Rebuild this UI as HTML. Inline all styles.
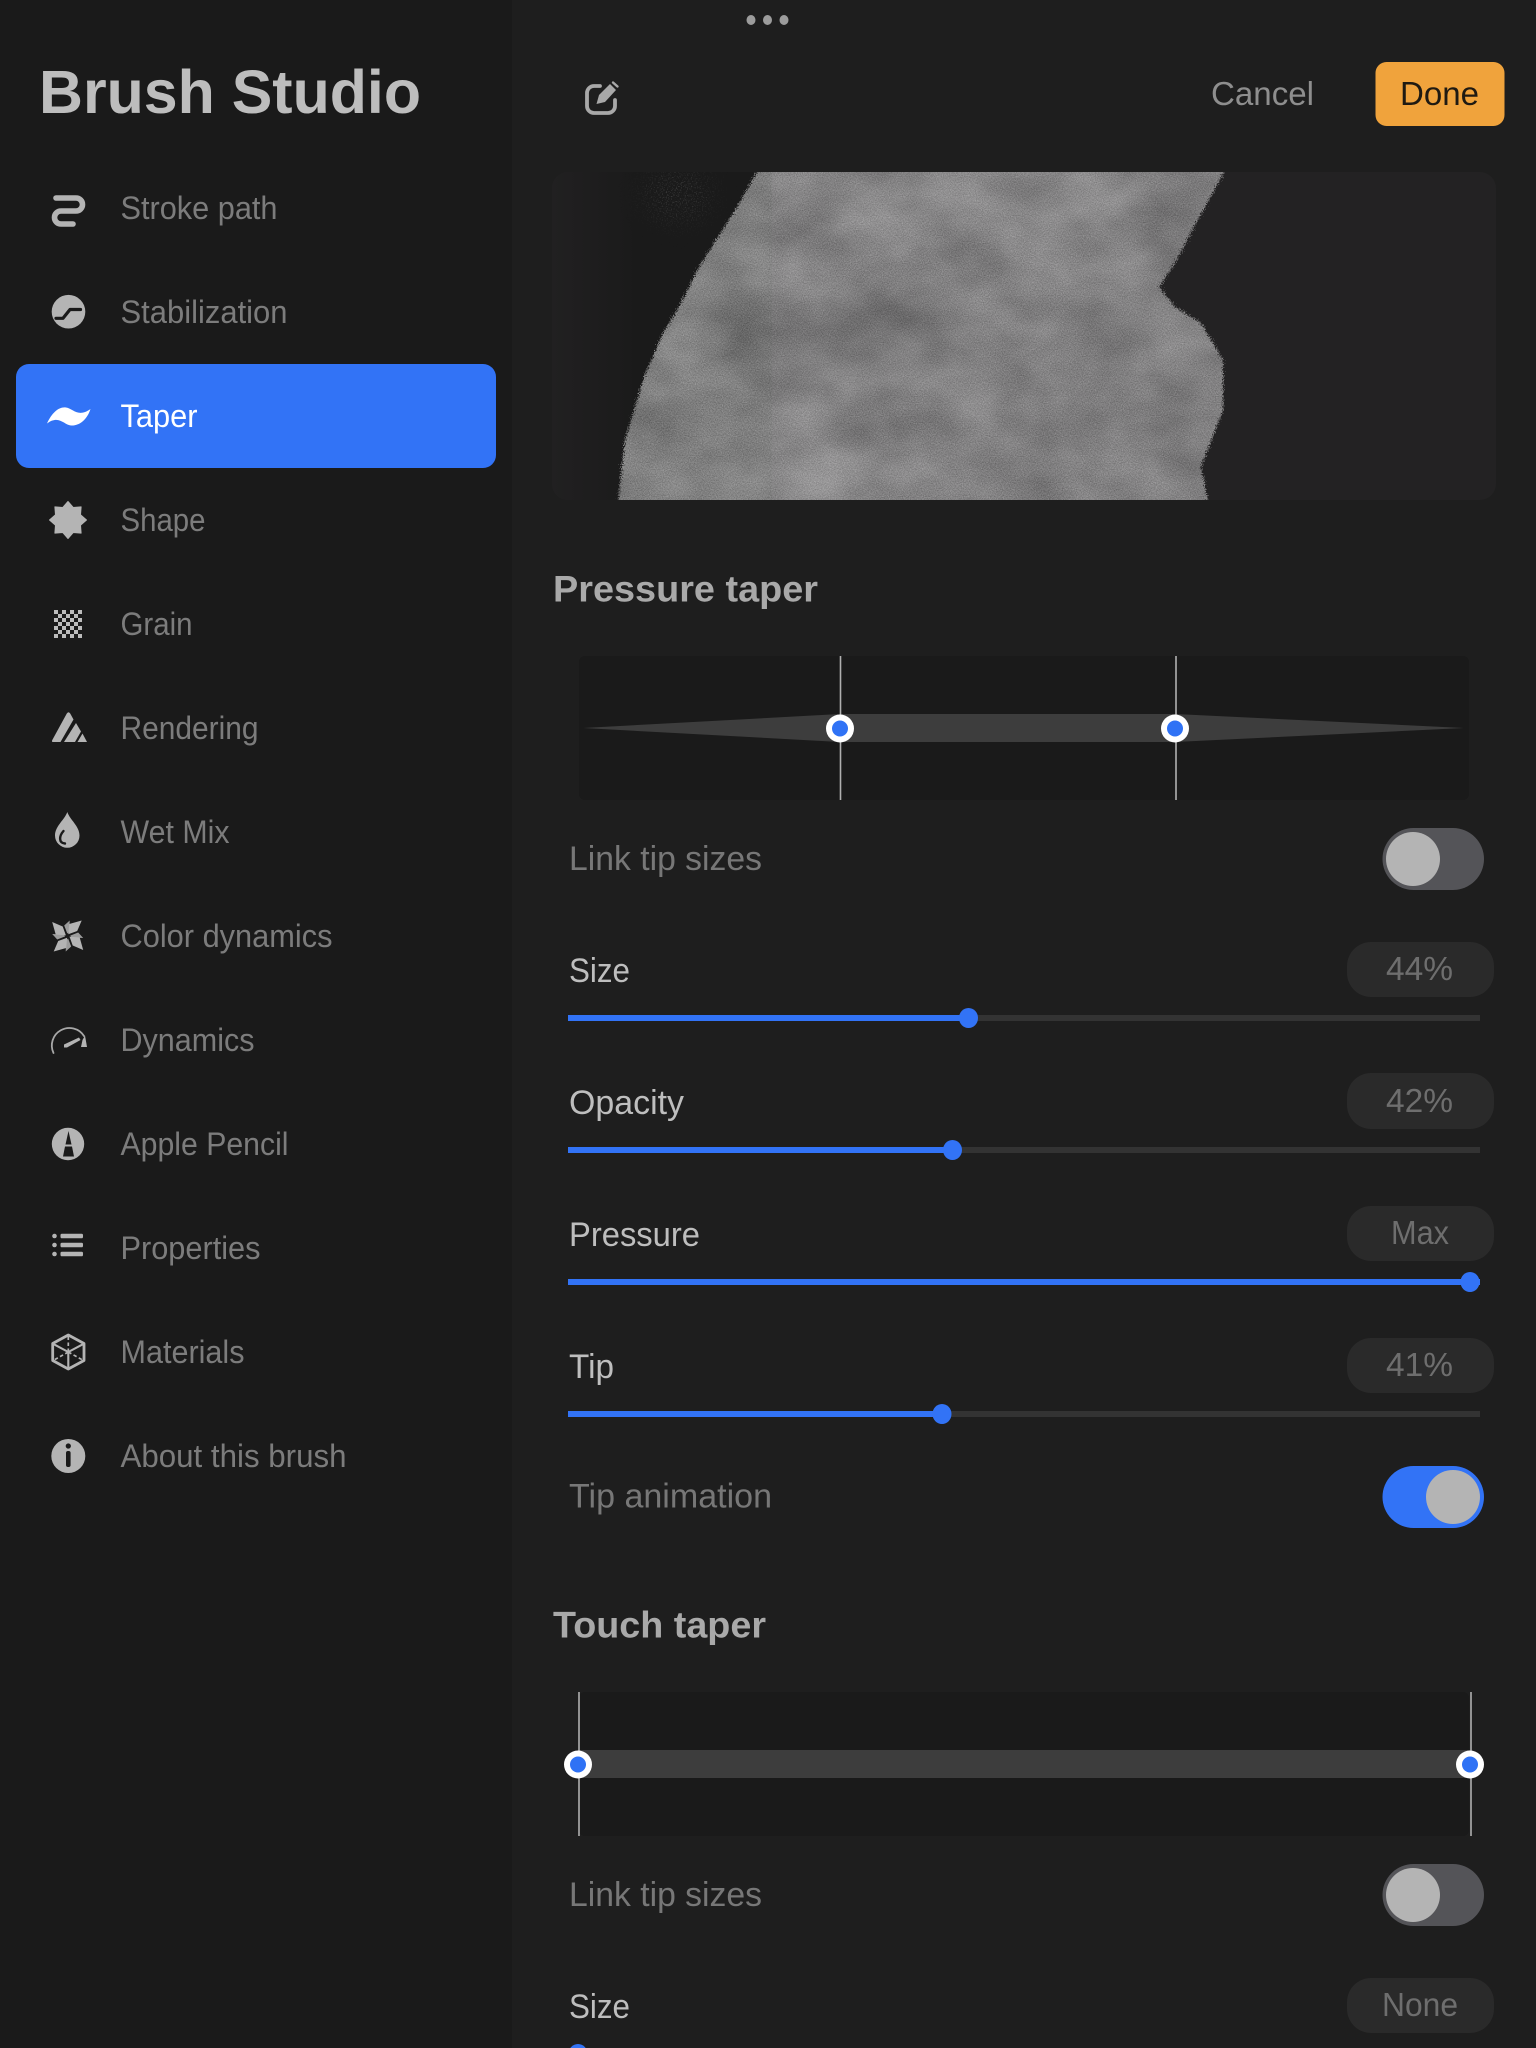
<!DOCTYPE html>
<html lang="en"><head><meta charset="utf-8"><title>Brush Studio</title>
<style>
html,body{margin:0;padding:0;background:#1e1e1e;width:1536px;height:2048px;overflow:hidden}
svg{display:block;position:absolute;left:0;top:0}
text{font-family:"Liberation Sans",sans-serif}
.n{font-size:32px;fill:#7c7c7c}
.l{font-size:34px;fill:#bebebe}
.d{font-size:34px;fill:#777}
.p{font-size:33px;fill:#6e6e6e}
.h{font-size:37px;font-weight:700;fill:#a9a9a9}
.i{fill:#b4b4b4}
</style></head><body>
<svg width="1536" height="2048" viewBox="0 0 1536 2048" xmlns="http://www.w3.org/2000/svg">
<defs>
<clipPath id="pc"><rect x="552" y="172" width="944" height="328" rx="16"/></clipPath>
<linearGradient id="lg" x1="553" x2="640" y1="0" y2="0" gradientUnits="userSpaceOnUse"><stop offset="0" stop-color="#212021"/><stop offset="1" stop-color="#1a1a1a"/></linearGradient>
<radialGradient id="hl1"><stop offset="0" stop-color="#fff" stop-opacity=".1"/><stop offset="1" stop-color="#fff" stop-opacity="0"/></radialGradient>
<radialGradient id="dk1"><stop offset="0" stop-color="#000" stop-opacity=".1"/><stop offset="1" stop-color="#000" stop-opacity="0"/></radialGradient>
<pattern id="chk" x="54" y="610" width="8" height="8" patternUnits="userSpaceOnUse"><rect width="4" height="4" fill="#bcbcbc"/><rect x="4" y="4" width="4" height="4" fill="#bcbcbc"/></pattern>
<filter id="grain" filterUnits="userSpaceOnUse" x="552" y="172" width="944" height="328" color-interpolation-filters="sRGB">
<feTurbulence type="fractalNoise" baseFrequency=".9" numOctaves="2" seed="4" result="n1"/>
<feDisplacementMap in="SourceGraphic" in2="n1" scale="10" xChannelSelector="R" yChannelSelector="G" result="shape"/>
<feTurbulence type="fractalNoise" baseFrequency=".014 .02" numOctaves="3" seed="12"/>
<feColorMatrix values="1 0 0 0 0 1 0 0 0 0 1 0 0 0 0 0 0 0 0 1" result="low"/>
<feTurbulence type="fractalNoise" baseFrequency=".85" numOctaves="2" seed="7"/>
<feColorMatrix values="1.5 0 0 0 -.25 1.5 0 0 0 -.25 1.5 0 0 0 -.25 0 0 0 0 1" result="hi"/>
<feComposite in="low" in2="hi" operator="arithmetic" k1="0" k2=".2" k3=".2" k4=".26" result="tex"/>
<feComposite in="tex" in2="shape" operator="in"/>
</filter>
<filter id="spk" filterUnits="userSpaceOnUse" x="560" y="172" width="200" height="90" color-interpolation-filters="sRGB">
<feGaussianBlur in="SourceGraphic" stdDeviation="14" result="b"/>
<feTurbulence type="fractalNoise" baseFrequency=".8" numOctaves="1" seed="3"/>
<feColorMatrix values="0 0 0 0 .5 0 0 0 0 .5 0 0 0 0 .5 5 0 0 0 -2.6"/>
<feComposite in2="b" operator="in"/>
</filter>
</defs>

<rect width="1536" height="2048" fill="#1e1e1e"/>
<rect width="512" height="2048" fill="#1a1a1a"/>

<!-- sidebar -->
<text x="39" y="113" font-size="61" font-weight="700" fill="#bdbdbd" textLength="382" lengthAdjust="spacingAndGlyphs">Brush Studio</text>
<rect x="16" y="364" width="480" height="104" rx="13" fill="#3273f6"/>
<text class="n" x="120.5" y="219" textLength="157" lengthAdjust="spacingAndGlyphs">Stroke path</text>
<text class="n" x="120.5" y="323" textLength="167" lengthAdjust="spacingAndGlyphs">Stabilization</text>
<text class="n" x="120.5" y="427" textLength="77" lengthAdjust="spacingAndGlyphs" style="fill:#fff">Taper</text>
<text class="n" x="120.5" y="531" textLength="85" lengthAdjust="spacingAndGlyphs">Shape</text>
<text class="n" x="120.5" y="635" textLength="72" lengthAdjust="spacingAndGlyphs">Grain</text>
<text class="n" x="120.5" y="739" textLength="138" lengthAdjust="spacingAndGlyphs">Rendering</text>
<text class="n" x="120.5" y="843" textLength="109" lengthAdjust="spacingAndGlyphs">Wet Mix</text>
<text class="n" x="120.5" y="947" textLength="212" lengthAdjust="spacingAndGlyphs">Color dynamics</text>
<text class="n" x="120.5" y="1051" textLength="134" lengthAdjust="spacingAndGlyphs">Dynamics</text>
<text class="n" x="120.5" y="1155" textLength="168" lengthAdjust="spacingAndGlyphs">Apple Pencil</text>
<text class="n" x="120.5" y="1259" textLength="140" lengthAdjust="spacingAndGlyphs">Properties</text>
<text class="n" x="120.5" y="1363" textLength="124" lengthAdjust="spacingAndGlyphs">Materials</text>
<text class="n" x="120.5" y="1467" textLength="226" lengthAdjust="spacingAndGlyphs">About this brush</text>

<!-- sidebar icons -->
<path d="M56 198H76a6.5 6.5 0 0 1 0 13H61a6.5 6.5 0 0 0 0 13H73" fill="none" stroke="#b4b4b4" stroke-width="5.6" stroke-linecap="round"/>
<circle class="i" cx="68.5" cy="311.7" r="16.8"/>
<path d="M56 318.3H63L70 309.5H80.5" fill="none" stroke="#1a1a1a" stroke-width="3.2" stroke-linecap="round" stroke-linejoin="round"/>
<path d="M47 423.5C52 412.5 59 406.5 66 407.5C73 408.5 78 418 90.5 409C87 420 79 426 71 425.5C64 425 59 414.5 47 423.5Z" fill="#fff"/>
<polygon class="i" stroke="#b4b4b4" stroke-width="1" stroke-linejoin="round" points="68,501.5 73.2,507.5 81.1,506.9 80.5,514.8 86.5,520 80.5,525.2 81.1,533.1 73.2,532.5 68,538.5 62.8,532.5 54.9,533.1 55.5,525.2 49.5,520 55.5,514.8 54.9,506.9 62.8,507.5"/>
<rect x="54" y="610" width="28" height="28" fill="url(#chk)"/>
<path class="i" d="M66.8 713.5Q68.5 711 70.2 713.5L73.5 719.5L60.5 742H53Q51.3 742 52.3 740Z"/>
<path class="i" d="M76 723L81 731.5L75 742H64Z"/>
<path class="i" d="M82.5 733.5L87 742H77.5Z"/>
<path class="i" d="M67.3 812C70 820 79.5 826 79.5 835.5A12.2 12.2 0 0 1 55 835.5C55 826 64.5 820 67.3 812Z"/>
<path d="M63.5 831C59 836 58.5 843 65 843.5" fill="none" stroke="#1a1a1a" stroke-width="2.4" stroke-linecap="round"/>
<g class="i" transform="translate(67.7 936)">
<g><path d="M.6-1.8L1.5-12L14-15.5L9.5-5Z"/><path d="M2.5-.4L10.5-3.5L15.5 2L4 1.5Z" opacity=".85"/></g>
<g transform="rotate(90)"><path d="M.6-1.8L1.5-12L14-15.5L9.5-5Z"/><path d="M2.5-.4L10.5-3.5L15.5 2L4 1.5Z" opacity=".85"/></g>
<g transform="rotate(180)"><path d="M.6-1.8L1.5-12L14-15.5L9.5-5Z"/><path d="M2.5-.4L10.5-3.5L15.5 2L4 1.5Z" opacity=".85"/></g>
<g transform="rotate(270)"><path d="M.6-1.8L1.5-12L14-15.5L9.5-5Z"/><path d="M2.5-.4L10.5-3.5L15.5 2L4 1.5Z" opacity=".85"/></g>
</g>
<path d="M53.5 1053A17.5 17.5 0 0 1 84 1036" fill="none" stroke="#a8a8a8" stroke-width="1.8" stroke-linecap="round"/>
<polygon class="i" points="82.5,1040 85,1035.5 87,1047 81,1047"/>
<polygon class="i" points="64,1044.5 79,1037.5 80.5,1040 67,1047.5 64,1047.5"/>
<circle class="i" cx="68" cy="1144" r="16.2"/>
<polygon fill="#1a1a1a" points="68.5,1131 71.5,1144.5 65.5,1144.5"/>
<polygon fill="#1a1a1a" points="65,1146.5 72,1146.5 74,1156.5 63,1156.5"/>
<g class="i"><circle cx="54.5" cy="1236" r="2.3"/><circle cx="54.5" cy="1245" r="2.3"/><circle cx="54.5" cy="1254" r="2.3"/>
<rect x="60.5" y="1233.7" width="22.5" height="4.6" rx="1.4"/><rect x="60.5" y="1242.7" width="22.5" height="4.6" rx="1.4"/><rect x="60.5" y="1251.7" width="22.5" height="4.6" rx="1.4"/></g>
<g fill="none" stroke="#b4b4b4" stroke-linejoin="round">
<polygon stroke-width="2.8" points="68.3,1335 84,1343.5 84,1360.5 68.3,1369 52.7,1360.5 52.7,1343.5"/>
<path stroke-width="2.1" d="M68.3 1352V1369M68.3 1352L53 1343.8M68.3 1352L83.7 1343.8"/>
<path stroke-width="1.7" stroke-dasharray="3.5 2.5" d="M68.3 1352V1336M68.3 1352L54 1360M68.3 1352L82.6 1360"/>
</g>
<circle class="i" cx="68.3" cy="1456" r="17"/>
<circle cx="68.3" cy="1446" r="2.6" fill="#1a1a1a"/>
<rect x="66" y="1451" width="4.6" height="16" rx="2" fill="#1a1a1a"/>

<!-- top bar -->
<ellipse cx="751" cy="20" rx="4.5" ry="5" fill="#9c9c9c"/><ellipse cx="767.5" cy="20" rx="4.5" ry="5" fill="#9c9c9c"/><ellipse cx="784" cy="20" rx="4.5" ry="5" fill="#9c9c9c"/>
<path d="M600 86H594a7 7 0 0 0-7 7V106a7 7 0 0 0 7 7H608a7 7 0 0 0 7-7V100" fill="none" stroke="#a8a8a8" stroke-width="3.8" stroke-linecap="round"/>
<polygon fill="#a8a8a8" points="599,95 610,84 616,90 605,102 596.5,104"/>
<path d="M613 82.5L617.5 86.5" stroke="#a8a8a8" stroke-width="2.4" stroke-linecap="round"/>
<text x="1211" y="105" font-size="33" fill="#8e8e8e" textLength="103" lengthAdjust="spacingAndGlyphs">Cancel</text>
<rect x="1375.5" y="62" width="129" height="64" rx="11" fill="#f0a33c"/>
<text x="1400" y="105" font-size="33" fill="#1f1a12" textLength="79" lengthAdjust="spacingAndGlyphs">Done</text>

<!-- preview -->
<rect x="552" y="172" width="944" height="328" rx="16" fill="#232223"/>
<g clip-path="url(#pc)">
<rect x="552" y="172" width="220" height="328" fill="url(#lg)"/>
<ellipse cx="678" cy="195" rx="34" ry="26" fill="#fff" filter="url(#spk)" opacity=".35"/>
<polygon filter="url(#grain)" fill="#fff" points="761,165 737,207 699,267 679,307 663,333 644,377 625,440 617,510 1210,510 1201,467 1223,410 1223,360 1201,323 1175,307 1159,287 1175,263 1194,227 1228,165"/>
<ellipse cx="900" cy="195" rx="140" ry="50" fill="url(#hl1)"/>
<ellipse cx="1060" cy="210" rx="80" ry="45" fill="url(#hl1)"/>
<ellipse cx="780" cy="480" rx="130" ry="40" fill="url(#hl1)"/>
<ellipse cx="860" cy="340" rx="170" ry="70" fill="url(#dk1)"/>
</g>

<!-- pressure taper -->
<text class="h" x="553" y="601.7" textLength="265" lengthAdjust="spacingAndGlyphs">Pressure taper</text>
<rect x="579" y="656" width="890" height="144" rx="6" fill="#1a1a1a"/>
<polygon fill="#3d3d3d" points="583,728 840,714 1175,714 1464,728 1175,742 840,742"/>
<rect x="839.7" y="656" width="1.6" height="144" fill="#b0b0b0"/><rect x="1175.2" y="656" width="1.6" height="144" fill="#b0b0b0"/>
<circle cx="840" cy="728.5" r="14" fill="#fff"/><circle cx="840" cy="728.5" r="8" fill="#2f72f5"/>
<circle cx="1175" cy="728.5" r="14" fill="#fff"/><circle cx="1175" cy="728.5" r="8" fill="#2f72f5"/>

<text class="d" x="569" y="870" textLength="193" lengthAdjust="spacingAndGlyphs">Link tip sizes</text>
<rect x="1382.5" y="828" width="101.5" height="62" rx="31" fill="#545458"/><circle cx="1413" cy="859" r="27" fill="#b4b4b4"/>

<text class="l" x="569" y="982" textLength="61" lengthAdjust="spacingAndGlyphs">Size</text>
<rect x="1347" y="942" width="147" height="55" rx="24" fill="#2a2a2a"/>
<text class="p" x="1386" y="980" textLength="67" lengthAdjust="spacingAndGlyphs">44%</text>
<rect x="568" y="1015" width="912" height="6" fill="#333"/><rect x="568" y="1015" width="401" height="6" fill="#3273f6"/><ellipse cx="968.5" cy="1018" rx="9.5" ry="10" fill="#3273f6"/>

<text class="l" x="569" y="1114" textLength="115" lengthAdjust="spacingAndGlyphs">Opacity</text>
<rect x="1347" y="1073" width="147" height="56" rx="24" fill="#2a2a2a"/>
<text class="p" x="1386" y="1112" textLength="67" lengthAdjust="spacingAndGlyphs">42%</text>
<rect x="568" y="1147" width="912" height="6" fill="#333"/><rect x="568" y="1147" width="385" height="6" fill="#3273f6"/><ellipse cx="952.5" cy="1150" rx="9.5" ry="10" fill="#3273f6"/>

<text class="l" x="569" y="1246" textLength="131" lengthAdjust="spacingAndGlyphs">Pressure</text>
<rect x="1347" y="1206" width="147" height="55" rx="24" fill="#2a2a2a"/>
<text class="p" x="1391" y="1244" textLength="58" lengthAdjust="spacingAndGlyphs">Max</text>
<rect x="568" y="1279" width="912" height="6" fill="#3273f6"/><ellipse cx="1470" cy="1282" rx="9.5" ry="10" fill="#3273f6"/>

<text class="l" x="569" y="1378" textLength="45" lengthAdjust="spacingAndGlyphs">Tip</text>
<rect x="1347" y="1338" width="147" height="55" rx="24" fill="#2a2a2a"/>
<text class="p" x="1386" y="1376" textLength="67" lengthAdjust="spacingAndGlyphs">41%</text>
<rect x="568" y="1411" width="912" height="6" fill="#333"/><rect x="568" y="1411" width="374" height="6" fill="#3273f6"/><ellipse cx="942" cy="1414" rx="9.5" ry="10" fill="#3273f6"/>

<text class="d" x="569" y="1507.7" textLength="203" lengthAdjust="spacingAndGlyphs">Tip animation</text>
<rect x="1382.5" y="1466" width="101.5" height="62" rx="31" fill="#3273f6"/><circle cx="1453" cy="1497" r="27" fill="#b4b4b4"/>

<!-- touch taper -->
<text class="h" x="553" y="1637.7" textLength="213" lengthAdjust="spacingAndGlyphs">Touch taper</text>
<rect x="579" y="1692" width="890" height="144" rx="6" fill="#1a1a1a"/>
<rect x="579" y="1750" width="891" height="28" fill="#3d3d3d"/>
<rect x="578.2" y="1692" width="1.6" height="144" fill="#b0b0b0"/><rect x="1470.2" y="1692" width="1.6" height="144" fill="#b0b0b0"/>
<circle cx="578" cy="1764.5" r="14" fill="#fff"/><circle cx="578" cy="1764.5" r="8" fill="#2f72f5"/>
<circle cx="1470" cy="1764.5" r="14" fill="#fff"/><circle cx="1470" cy="1764.5" r="8" fill="#2f72f5"/>

<text class="d" x="569" y="1906" textLength="193" lengthAdjust="spacingAndGlyphs">Link tip sizes</text>
<rect x="1382.5" y="1864" width="101.5" height="62" rx="31" fill="#545458"/><circle cx="1413" cy="1895" r="27" fill="#b4b4b4"/>

<text class="l" x="569" y="2018" textLength="61" lengthAdjust="spacingAndGlyphs">Size</text>
<rect x="1347" y="1978" width="147" height="55" rx="24" fill="#2a2a2a"/>
<text class="p" x="1382" y="2016" textLength="76" lengthAdjust="spacingAndGlyphs">None</text>
<ellipse cx="578" cy="2054" rx="9.5" ry="10" fill="#3273f6"/>
</svg>
</body></html>
